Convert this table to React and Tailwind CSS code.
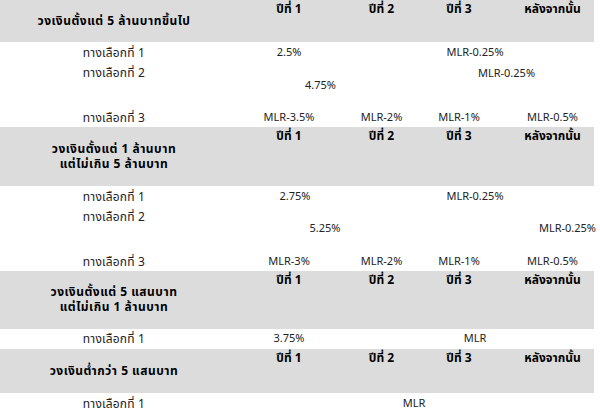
import React from "react";

const COLS = "grid grid-cols-[228px_122px_63px_92px_95px]";
const FONT = { fontFamily: 'Tahoma, "Noto Sans Thai", "Liberation Sans", "DejaVu Sans", sans-serif' };

function Header({ h, title }) {
  return (
    <div className={`w-[594px] bg-[#dcdcdc] ${h}`}>
      <div className={`${COLS} h-full font-bold text-black text-[12px]`}>
        <div className="flex items-center justify-center text-center leading-[15px] tracking-[0.5px]">{title}</div>
        <div className="pt-[2px] text-center leading-[14px]">ปีที่ 1</div>
        <div className="pt-[2px] text-center leading-[14px]">ปีที่ 2</div>
        <div className="pt-[2px] text-center leading-[14px]">ปีที่ 3</div>
        <div className="pt-[2px] text-center leading-[14px]">หลังจากนั้น</div>
      </div>
    </div>
  );
}

function Row({ h, children }) {
  return <div className={`${COLS} ${h} items-center leading-[14px] text-[#222]`}>{children}</div>;
}

const Label = ({ n, cls = "" }) => (
  <div className={`text-center text-[12px] tracking-[0.2px] ${cls}`}>ทางเลือกที่ {n}</div>
);

export default function App() {
  return (
    <div className="w-[600px] h-[418px] overflow-hidden bg-white text-[11px]" style={FONT}>
      <Header h="h-[42px]" title="วงเงินตั้งแต่ 5 ล้านบาทขึ้นไป" />
      <Row h="h-[21px]">
        <Label n="1" />
        <div className="text-center">2.5%</div>
        <div className="col-span-3 text-center">MLR-0.25%</div>
      </Row>
      <div className={`${COLS} h-[45px] items-start leading-[14px] text-[#222]`}>
        <Label n="2" cls="pt-[3px]" />
        <div className="col-span-2 pt-[16px] text-center">4.75%</div>
        <div className="col-span-2 pt-[4px] text-center">MLR-0.25%</div>
      </div>
      <Row h="h-[19px]">
        <Label n="3" />
        <div className="text-center">MLR-3.5%</div>
        <div className="text-center">MLR-2%</div>
        <div className="text-center">MLR-1%</div>
        <div className="text-center">MLR-0.5%</div>
      </Row>

      <Header
        h="h-[59px]"
        title={
          <span>
            วงเงินตั้งแต่ 1 ล้านบาท
            <br />
            แต่ไม่เกิน 5 ล้านบาท
          </span>
        }
      />
      <Row h="h-[21px]">
        <Label n="1" />
        <div className="pl-[12px] text-center">2.75%</div>
        <div className="col-span-3 text-center">MLR-0.25%</div>
      </Row>
      <div className={`${COLS} h-[45px] items-start leading-[14px] text-[#222]`}>
        <Label n="2" cls="pt-[3px]" />
        <div className="col-span-2 pl-[9px] pt-[15px] text-center">5.25%</div>
        <div />
        <div className="pr-[4px] pt-[15px] text-right">MLR-0.25%</div>
      </div>
      <Row h="h-[19px]">
        <Label n="3" />
        <div className="text-center">MLR-3%</div>
        <div className="text-center">MLR-2%</div>
        <div className="text-center">MLR-1%</div>
        <div className="text-center">MLR-0.5%</div>
      </Row>

      <Header
        h="h-[58px]"
        title={
          <span>
            วงเงินตั้งแต่ 5 แสนบาท
            <br />
            แต่ไม่เกิน 1 ล้านบาท
          </span>
        }
      />
      <Row h="h-[20px]">
        <Label n="1" />
        <div className="text-center">3.75%</div>
        <div className="col-span-3 text-center">MLR</div>
      </Row>

      <Header h="h-[44px]" title="วงเงินต่ำกว่า 5 แสนบาท" />
      <Row h="h-[21px]">
        <Label n="1" />
        <div className="col-span-4 text-center">MLR</div>
      </Row>
    </div>
  );
}
